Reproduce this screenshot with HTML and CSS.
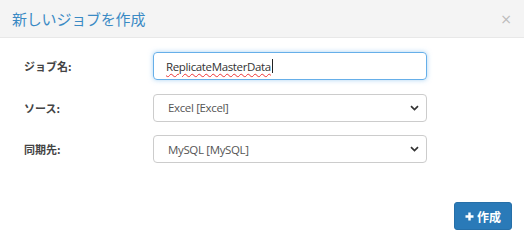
FILE: index.html
```html
<!DOCTYPE html>
<html lang="ja">
<head>
<meta charset="utf-8">
<link rel="stylesheet" href="styles.css">
</head>
<body>
<div class="modal">
  <div class="modal-header">
    <h4 class="modal-title">新しいジョブを作成</h4>
    <span class="close">×</span>
  </div>
  <div class="modal-body">
    <div class="form-row">
      <label class="label">ジョブ名:</label>
      <div class="field input focused"><span class="typed">ReplicateMasterData</span><span class="caret"></span></div>
    </div>
    <div class="form-row">
      <label class="label">ソース:</label>
      <div class="field select"><span>Excel [Excel]</span>
        <svg class="chev" width="9" height="6" viewBox="0 0 9 6"><path d="M1 1.2 L4.5 4.6 L8 1.2" fill="none" stroke="#333" stroke-width="1.7"/></svg>
      </div>
    </div>
    <div class="form-row">
      <label class="label">同期先:</label>
      <div class="field select"><span>MySQL [MySQL]</span>
        <svg class="chev" width="9" height="6" viewBox="0 0 9 6"><path d="M1 1.2 L4.5 4.6 L8 1.2" fill="none" stroke="#333" stroke-width="1.7"/></svg>
      </div>
    </div>
  </div>
  <div class="modal-footer">
    <button class="btn-create"><svg width="9" height="9" viewBox="0 0 9 9"><path d="M4.5 0.5 V8.5 M0.5 4.5 H8.5" stroke="#fff" stroke-width="2.4"/></svg><span>作成</span></button>
  </div>
</div>
</body>
</html>
```

FILE: styles.css
```css
* { box-sizing: border-box; }
html, body { margin: 0; padding: 0; background: #fff; }
body {
  width: 524px;
  height: 242px;
  overflow: hidden;
  font-family: "Open Sans", "Noto Sans CJK JP", sans-serif;
  color: #333;
}
.modal { width: 524px; }
.modal-header {
  height: 38px;
  background: #f4f4f4;
  border-bottom: 1px solid #e8e8e8;
  display: flex;
  align-items: center;
  justify-content: space-between;
  padding: 0 12px 0 12px;
}
.modal-title {
  margin: 0;
  font-family: "Noto Sans CJK JP", sans-serif;
  font-weight: 400;
  font-size: 15px;
  color: #3a8ac4;
  letter-spacing: -0.2px;
  line-height: 1;
}
.close {
  font-family: "DejaVu Sans", sans-serif;
  font-size: 14px;
  color: #bbb;
  margin-right: 0;
}
.modal-body {
  padding: 14px 0 0 0;
  display: flex;
  flex-direction: column;
  gap: 13.5px;
}
.form-row {
  display: flex;
  align-items: center;
  height: 28px;
}
.label {
  width: 153px;
  padding-left: 24px;
  font-family: "Noto Sans CJK JP", sans-serif;
  font-weight: 700;
  font-size: 11px;
  color: #444;
}
.field {
  width: 274px;
  height: 28px;
  border: 1px solid #ccc;
  border-radius: 4px;
  display: flex;
  align-items: center;
  padding: 0 7px 0 12px;
  font-size: 11.5px;
  letter-spacing: -0.35px;
  color: #555;
}
.select { padding-left: 14px; justify-content: space-between; }
.focused {
  border-color: #66afe9;
  box-shadow: 0 0 5px rgba(102,175,233,0.55);
  color: #333;
}
.typed {
  text-decoration: underline wavy #e33;
  text-decoration-thickness: 1px;
  text-underline-offset: 2px;
}
.caret {
  width: 1px;
  height: 14px;
  background: #222;
  margin-left: 1px;
}
.modal-footer {
  display: flex;
  justify-content: flex-end;
  padding: 39px 12px 0 0;
}
.btn-create {
  width: 58px;
  height: 28px;
  background: #2a7ab8;
  border: 1px solid #266fa8;
  border-radius: 3px;
  color: #fff;
  display: flex;
  align-items: center;
  justify-content: center;
  gap: 3px;
  padding: 0;
  font-family: "Noto Sans CJK JP", sans-serif;
  font-weight: 700;
  font-size: 12px;
}
```
